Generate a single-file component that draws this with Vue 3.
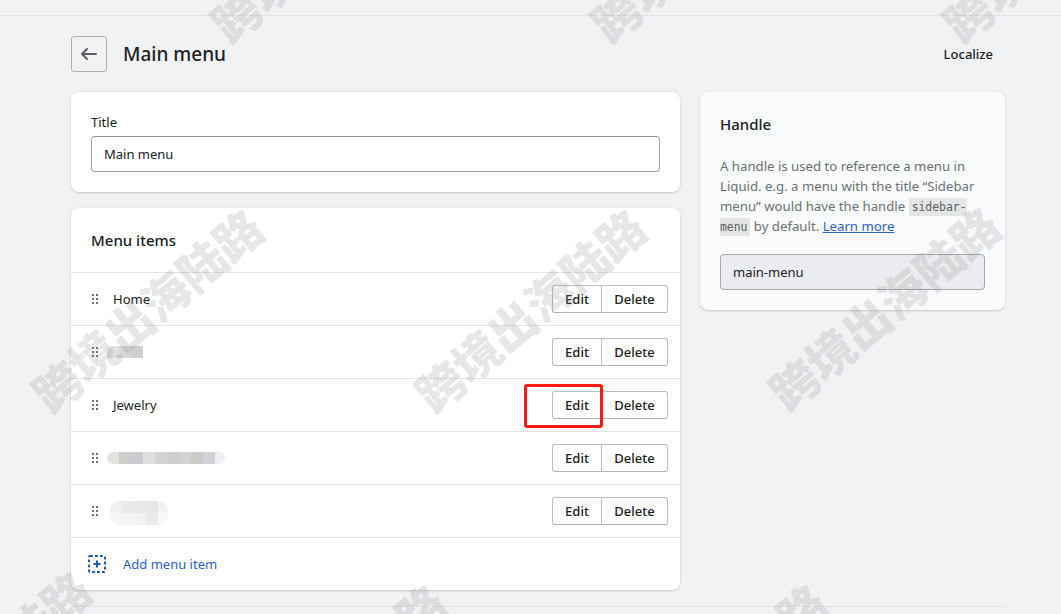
<script setup>
const rows = [
  { id: 1, label: 'Home' },
  { id: 2, blur: 'a' },
  { id: 3, label: 'Jewelry' },
  { id: 4, blur: 'b' },
  { id: 5, blur: 'c' },
]
const mosaics = {
  a: ['#e3dfdc', '#d9d8d8', '#cfcfcf'],
  b: ['#e2e2de', '#cdcdcb', '#cbcace', '#dedede', '#d2d2d2', '#cdcdd0', '#d3d1d4', '#cbcbc7', '#d3d1d5', '#eff0f2'],
  c: ['#f0f0f0', '#ece7e9', '#e7e8e8', '#e6e6e6', '#f3f3f3', '#f5f5f5', '#f5f3f4', '#f2f2f0', '#ebebec', '#f8f8f8'],
}
const marks = [
  { id: 1, x: 146, y: 309 },
  { id: 2, x: 529, y: 309 },
  { id: 3, x: 883, y: 307 },
  { id: 4, x: 325, y: -61 },
  { id: 5, x: 705, y: -61 },
  { id: 6, x: 1057, y: -61 },
  { id: 7, x: -26, y: 671 },
  { id: 8, x: 329, y: 684 },
  { id: 9, x: 710, y: 684 },
]
const markPos = (m) => ({ left: m.x + 'px', top: m.y + 'px' })
</script>

<template>
  <div class="page">
    <div class="inner">
      <header class="head">
        <button class="back" aria-label="Back">
          <svg width="20" height="20" viewBox="0 0 20 20"><path d="M17 9H5.41l3.3-3.29a1 1 0 1 0-1.42-1.42l-5 5a1 1 0 0 0 0 1.42l5 5a1 1 0 0 0 1.42-1.42L5.41 11H17a1 1 0 1 0 0-2z" fill="#5c5f62"/></svg>
        </button>
        <h1>Main menu</h1>
        <span class="localize">Localize</span>
      </header>
      <div class="cols">
        <main class="left">
          <section class="card title-card">
            <label>Title</label>
            <div class="field">Main menu</div>
          </section>
          <section class="card items">
            <h2>Menu items</h2>
            <div v-for="r in rows" :key="r.id" class="row">
              <svg class="drag" width="8" height="12" viewBox="0 0 8 12"><g fill="#6d7175"><rect x="1" y="1" width="2" height="2"/><rect x="5" y="1" width="2" height="2"/><rect x="1" y="5" width="2" height="2"/><rect x="5" y="5" width="2" height="2"/><rect x="1" y="9" width="2" height="2"/><rect x="5" y="9" width="2" height="2"/></g></svg>
              <span v-if="r.label" class="label">{{ r.label }}</span>
              <span v-else class="mosaic" :class="'m-' + r.blur">
                <i v-for="(c, i) in mosaics[r.blur]" :key="i" :style="{ background: c }"></i>
              </span>
              <div class="btns">
                <button>Edit</button>
                <button>Delete</button>
              </div>
            </div>
            <div class="add">
              <svg width="18" height="18" viewBox="0 0 18 18"><rect x="1" y="1" width="16" height="16" rx="1" fill="none" stroke="#2459b8" stroke-width="2" stroke-dasharray="2.8 2.2"/><path d="M9 5.5v7M5.5 9h7" stroke="#2459b8" stroke-width="2" fill="none"/></svg>
              <span>Add menu item</span>
            </div>
          </section>
        </main>
        <aside class="card side">
          <h2>Handle</h2>
          <p>A handle is used to reference a menu in Liquid. e.g. a menu with the title “Sidebar menu” would have the handle <code>sidebar-menu</code> by default. <a href="#">Learn more</a></p>
          <div class="field disabled">main-menu</div>
        </aside>
      </div>
      <div class="foot-line"></div>
    </div>
    <div class="redbox"></div>
    <div class="marks">
      <span v-for="m in marks" :key="m.id" class="mark" :style="markPos(m)">跨境出海陆路</span>
    </div>
  </div>
</template>

<style>
html, body { margin: 0; background: #f1f2f4; overflow: hidden; }
</style>

<style scoped>
.page {
  position: relative;
  width: 1061px;
  height: 614px;
  overflow: hidden;
  background: #f1f2f4;
  font-family: "Noto Sans", "Open Sans", sans-serif;
  font-size: 13px;
  color: #202223;
}
.inner {
  box-sizing: border-box;
  height: 614px;
  padding: 15px 56px 0 71px;
}
.inner::before {
  content: "";
  display: block;
  height: 1px;
  background: #e1e3e5;
  margin: 0 -56px 0 -71px;
}
.head {
  display: flex;
  align-items: center;
  height: 36px;
  margin-top: 20px;
  padding-right: 12px;
}
.back {
  box-sizing: border-box;
  width: 36px;
  height: 36px;
  padding: 0;
  display: flex;
  align-items: center;
  justify-content: center;
  background: transparent;
  border: 1px solid #aeb3ba;
  border-radius: 3px;
}
h1 {
  margin: 0 0 0 16px;
  font-size: 19px;
  font-weight: 500;
  flex: 1;
}
.localize { font-weight: 500; font-size: 13px; }
.cols {
  display: grid;
  grid-template-columns: 609px 305px;
  gap: 20px;
  margin-top: 20px;
  align-items: start;
}
.left { display: flex; flex-direction: column; gap: 16px; }
.card {
  box-sizing: border-box;
  background: #fff;
  border-radius: 8px;
  box-shadow: 0 0 5px rgba(23, 24, 24, .05), 0 1px 2px rgba(0, 0, 0, .15);
}
.title-card { height: 100px; padding: 20px; }
.title-card label { display: block; line-height: 20px; margin-bottom: 4px; }
.field {
  box-sizing: border-box;
  height: 36px;
  line-height: 34px;
  padding: 0 12px;
  border: 1px solid #a0a4aa;
  border-top-color: #8e9298;
  border-radius: 4px;
  background: #fff;
}
.items { height: 382px; }
.items h2 { height: 64px; padding: 0 20px; line-height: 65px; }
h2 { margin: 0; font-size: 15px; font-weight: 500; }
.row {
  box-sizing: border-box;
  display: flex;
  align-items: center;
  height: 53px;
  border-top: 1px solid #e1e3e5;
  padding: 0 12px 0 20px;
}
.drag { flex: none; }
.label { margin-left: 14px; }
.mosaic { display: flex; flex-wrap: wrap; overflow: hidden; }
.mosaic i { display: block; width: 12px; height: 12px; flex: none; }
.m-a { margin-left: 8px; width: 36px; border-radius: 6px 0 0 0; }
.m-b { margin-left: 8px; width: 118px; border-radius: 6px; }
.m-b i:last-child { width: 10px; }
.m-c { margin: 4px 0 0 11px; width: 58px; height: 24px; border-radius: 9px; }
.m-c i { height: 12px; }
.m-c i:nth-child(5n) { width: 10px; }
.btns { margin-left: auto; display: flex; }
.btns button {
  box-sizing: border-box;
  height: 28px;
  padding: 0;
  font: 500 13px "Noto Sans", "Open Sans", sans-serif;
  color: #202223;
  background: #fff;
  border: 1px solid #babfc3;
  border-bottom-color: #aeb4b9;
}
.btns button:first-child { width: 50px; border-radius: 3px 0 0 3px; }
.btns button:last-child { width: 67px; margin-left: -1px; border-radius: 0 3px 3px 0; }
.add {
  display: flex;
  align-items: center;
  gap: 17px;
  height: 52px;
  padding: 0 0 0 17px;
  border-top: 1px solid #e1e3e5;
  color: #2c62c5;
}
.side { height: 218px; padding: 20px; background: #f9fafc; }
.side h2 { line-height: 24px; }
.side p {
  margin: 20px 0 18px;
  line-height: 20px;
  color: #6d7175;
  font-size: 13.2px;
}
code {
  font: 11.4px "DejaVu Sans Mono", "Liberation Mono", monospace;
  background: #e4e5e7;
  color: #5c5f62;
  padding: 2px 3px;
}
.side a { color: #2c62c5; }
.disabled { background: #ebecef; border-color: #a5a9ae; }
.foot-line {
  height: 1px;
  background: #e1e3e5;
  margin-top: 16px;
}
.redbox {
  position: absolute;
  left: 524px;
  top: 384px;
  width: 79px;
  height: 44px;
  box-sizing: border-box;
  border: 3px solid #fb1a16;
  border-radius: 3px;
}
.marks { position: absolute; inset: 0; pointer-events: none; }
.mark {
  position: absolute;
  transform: translate(-50%, -50%) rotate(-40deg);
  font: 900 47px "Noto Sans CJK SC", sans-serif;
  white-space: nowrap;
  color: rgba(130, 130, 130, .2);
}
</style>
